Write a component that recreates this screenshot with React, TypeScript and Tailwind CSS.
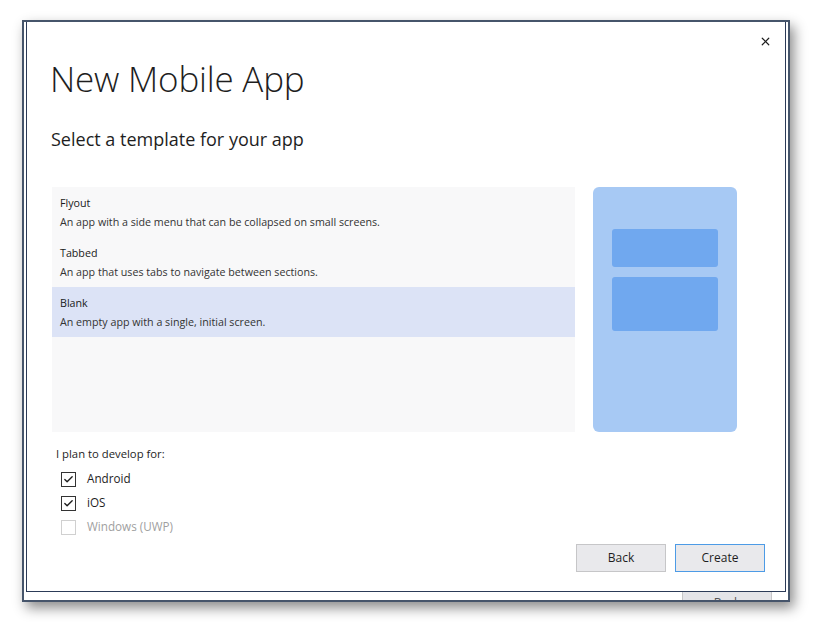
import { Check, X } from "lucide-react";

const templates = [
  { name: "Flyout", desc: "An app with a side menu that can be collapsed on small screens." },
  { name: "Tabbed", desc: "An app that uses tabs to navigate between sections." },
  { name: "Blank", desc: "An empty app with a single, initial screen.", selected: true },
];

const platforms = [
  { label: "Android", checked: true },
  { label: "iOS", checked: true },
  { label: "Windows (UWP)", checked: false, disabled: true },
];

function CheckBox({ label, checked, disabled }: { label: string; checked: boolean; disabled?: boolean }) {
  return (
    <div className="flex items-center h-[24px] pl-[9px]">
      <span
        className={
          "w-[15px] h-[15px] border flex items-center justify-center bg-white " +
          (disabled ? "border-[#d0d0d0]" : "border-[#333]")
        }
      >
        {checked && <Check size={11} strokeWidth={3} className="text-[#1e1e1e]" />}
      </span>
      <span className={"ml-[11px] text-[11.7px] " + (disabled ? "text-[#a0a0a0]" : "text-[#1e1e1e]")}>{label}</span>
    </div>
  );
}

export default function App() {
  return (
    <div className="w-[814px] h-[622px] bg-white pt-[20px] pl-[22px] font-['Open_Sans','Noto_Sans',sans-serif]">
      <div className="w-[768px] h-[582px] border-2 border-[#46556b] bg-white flex flex-col shadow-[4px_6px_12px_rgba(0,0,0,0.45)]">
        <div className="flex-1 mx-[2px] border-x border-b border-[#2c3b58] bg-white flex flex-col pl-[25px] pr-[20px]">
          <div className="flex justify-end pt-[13px] -mr-[7px]">
            <X size={13} strokeWidth={2.2} className="text-[#1e1e1e]" />
          </div>
          <h1 className="mt-[9px] -ml-[2px] text-[35px] leading-[44px] font-light text-[#1e1e1e] tracking-[-0.2px]">
            New Mobile App
          </h1>
          <p className="mt-[25px] -ml-[1px] text-[18px] leading-[26px] text-[#1e1e1e]">Select a template for your app</p>
          <div className="mt-[35px] flex gap-[18px]">
            <div className="w-[523px] h-[245px] bg-[#f8f8f9] flex flex-col">
              {templates.map((t) => (
                <div
                  key={t.name}
                  className={"h-[50px] px-[8px] pt-[7px] " + (t.selected ? "bg-[#dce3f6]" : "")}
                >
                  <div className="text-[10.7px] leading-[19px] text-[#1a1a1a]">{t.name}</div>
                  <div className="text-[10.7px] leading-[19px] text-[#333]">{t.desc}</div>
                </div>
              ))}
            </div>
            <div className="w-[144px] h-[245px] rounded-[6px] bg-[#a7c9f4] flex flex-col items-center pt-[42px] gap-[10px]">
              <div className="w-[106px] h-[38px] rounded-[3px] bg-[#70a8ef]" />
              <div className="w-[106px] h-[54px] rounded-[3px] bg-[#70a8ef]" />
            </div>
          </div>
          <div className="mt-[13px] pl-[4px] text-[11.3px] leading-[18px] text-[#1e1e1e]">I plan to develop for:</div>
          <div className="mt-[4px] flex flex-col">
            {platforms.map((p) => (
              <CheckBox key={p.label} label={p.label} checked={p.checked} disabled={p.disabled} />
            ))}
          </div>
          <div className="mt-[5px] flex justify-end gap-[9px]">
            <button className="w-[90px] h-[28px] bg-[#e9e9ec] border border-[#c6c6c8] text-[12px] text-[#1e1e1e]">
              Back
            </button>
            <button className="w-[90px] h-[28px] bg-[#e9e9ec] border border-[#4d9be6] text-[12px] text-[#1e1e1e]">
              Create
            </button>
          </div>
        </div>
        <div className="h-[8px] flex justify-end pr-[16px] overflow-hidden">
          <div className="w-[90px] h-[10px] bg-[#e4e4e8] border-x border-[#c6c6c8] flex items-end justify-center text-[12px] leading-[10px] text-[#555]">
            <span className="-mb-[6px]">Back</span>
          </div>
        </div>
      </div>
    </div>
  );
}
